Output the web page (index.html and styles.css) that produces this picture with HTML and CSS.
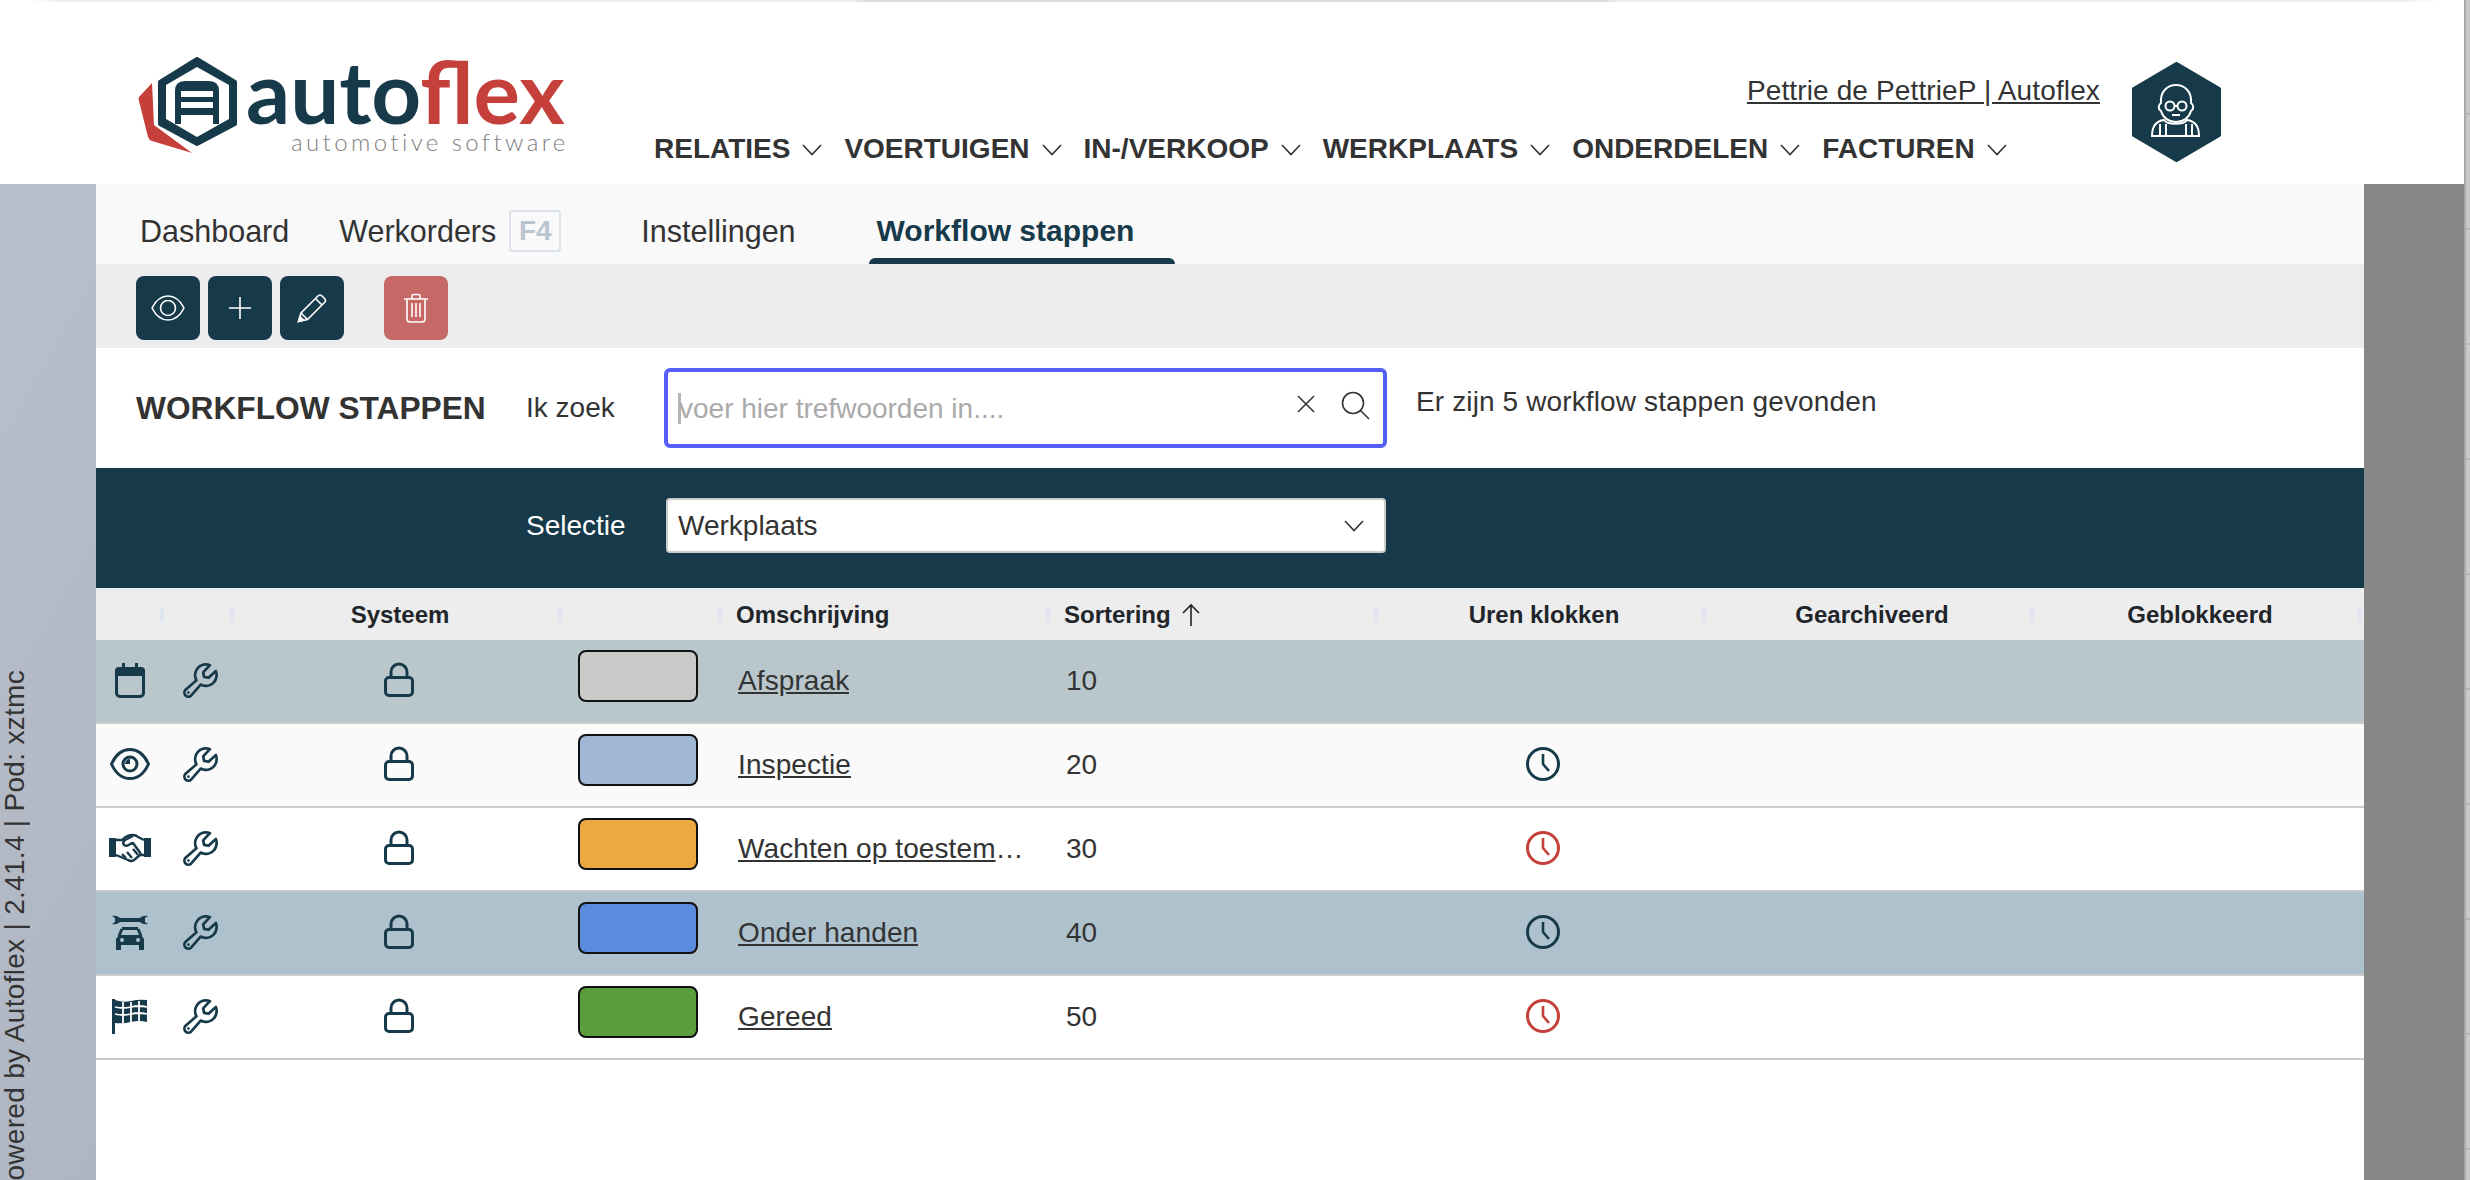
FILE: index.html
```html
<!DOCTYPE html>
<html lang="nl">

<head>
    <meta charset="UTF-8">
    <meta name="viewport" content="width=device-width, initial-scale=1.0">
    <title>Workflow stappen</title>
    <link rel="stylesheet" href="styles.css">
</head>

<body>
    <!-- icons used more than once -->
    <svg class="defs" width="0" height="0">
        <symbol id="i-chevron" viewBox="0 0 20 12">
            <path d="M1 1l9 9.500L19 1" fill="none" stroke="currentColor" stroke-width="1.600" />
        </symbol>
        <symbol id="i-wrench" viewBox="0 0 256 256">
            <path fill="currentColor" d="M226.76,69a8,8,0,0,0-12.84-2.88l-40.3,37.19-17.23-3.7-3.7-17.23,37.19-40.3A8,8,0,0,0,187,29.24,72,72,0,0,0,88,96,72.34,72.34,0,0,0,94,124.94L33.79,177c-.15.12-.29.26-.43.39a32,32,0,0,0,45.26,45.26c.13-.13.27-.28.39-.42L131.06,162A72,72,0,0,0,232,96,71.56,71.56,0,0,0,226.76,69ZM160,152a56.14,56.14,0,0,1-27.07-7,8,8,0,0,0-9.92,1.77L67.11,211.51a16,16,0,0,1-22.62-22.62L109.18,133a8,8,0,0,0,1.77-9.93,56,56,0,0,1,58.36-82.31l-31.2,33.81a8,8,0,0,0-1.94,7.1L141.83,108a8,8,0,0,0,6.14,6.14l26.35,5.66a8,8,0,0,0,7.1-1.94l33.81-31.2A56.06,56.06,0,0,1,160,152Z" />
            <circle cx="56" cy="200" r="8" fill="currentColor" />
        </symbol>
        <symbol id="i-lock" viewBox="0 0 32 36">
            <rect x="2.500" y="15.500" width="27" height="18" rx="3.500" fill="none" stroke="currentColor" stroke-width="3" />
            <path d="M8 15V10a8 8 0 0 1 16 0v5" fill="none" stroke="currentColor" stroke-width="3" />
        </symbol>
        <symbol id="i-clock" viewBox="0 0 36 36">
            <circle cx="18" cy="18" r="15.500" fill="none" stroke="currentColor" stroke-width="3" />
            <path d="M18 8v10l6 7" fill="none" stroke="currentColor" stroke-width="2.600" />
        </symbol>
    </svg>

    <div class="screen">
        <div class="window">
            <div class="hdr-line"></div>
            <header class="hdr">
                <a class="logo">
                    <svg class="logo-mark" width="100" height="96" viewBox="0 0 100 96">
                        <path d="M14 26L1 40q-1 2 0 4l9 36q1 3 4 4l40 12-38-28z" fill="#c5403a" />
                        <path d="M59 2l38 23v42L59 87 22 67V25z" fill="#173a4a" stroke="#173a4a" stroke-width="4" stroke-linejoin="round" />
                        <path d="M59 10l32 18v34L59 80 28 62V28z" fill="#fff" />
                        <path d="M37 34q0-10 10-10h24q10 0 10 10v33H37z" fill="#173a4a" />
                        <path d="M43 34h32v6H43zM43 45h32v6H43zM43 58h32v9H43z" fill="#fff" />
                    </svg>
                    <div class="logo-text">
                        <div class="logo-name">auto<span class="logo-red">flex</span></div>
                        <div class="logo-sub">automotive software</div>
                    </div>
                </a>
                <div class="hdr-main">
                    <div class="user"><a class="user-link">Pettrie de PettrieP | Autoflex</a></div>
                    <nav class="nav">
                        <a class="nav-item">RELATIES <svg class="chev"><use href="#i-chevron" /></svg></a>
                        <a class="nav-item">VOERTUIGEN <svg class="chev"><use href="#i-chevron" /></svg></a>
                        <a class="nav-item">IN-/VERKOOP <svg class="chev"><use href="#i-chevron" /></svg></a>
                        <a class="nav-item">WERKPLAATS <svg class="chev"><use href="#i-chevron" /></svg></a>
                        <a class="nav-item">ONDERDELEN <svg class="chev"><use href="#i-chevron" /></svg></a>
                        <a class="nav-item">FACTUREN <svg class="chev"><use href="#i-chevron" /></svg></a>
                    </nav>
                </div>
                <svg class="avatar" width="89" height="100" viewBox="0 0 89 100">
                    <path d="M44.500 2L87 27v46L44.500 98 2 73V27z" fill="#173a4a" stroke="#173a4a" stroke-width="4" stroke-linejoin="round" />
                    <g fill="none" stroke="#fff" stroke-width="2">
                        <path d="M29 41c-1-12 7-18 15-18s16 6 15 18c3 2 3 6 0 8-2 7-8 11-15 11s-13-4-15-11c-3-2-3-6 0-8z" />
                        <circle cx="38" cy="44" r="4.500" />
                        <circle cx="50" cy="44" r="4.500" />
                        <path d="M42 44h4M40 53h8" />
                        <path d="M32 58c-8 1-12 6-12 16h47c0-10-4-15-12-16-3 5-20 5-23 0zM28 62v12M34 62v12M54 62v12M60 62v12" />
                    </g>
                </svg>
            </header>

            <div class="body">
                <aside class="side">
                    <div class="powered">Powered by Autoflex | 2.41.4 | Pod: xztmc</div>
                </aside>

                <main class="content">
                    <div class="tabs">
                        <a class="tab tab-dash">Dashboard</a>
                        <a class="tab tab-orders">Werkorders <kbd class="key">F4</kbd></a>
                        <a class="tab tab-settings">Instellingen</a>
                        <a class="tab tab-active">Workflow stappen</a>
                    </div>

                    <div class="toolbar">
                        <button class="btn">
                            <svg width="34" height="26" viewBox="0 0 34 26" fill="none" stroke="#fff" stroke-width="1.600">
                                <path d="M1 13C5 5 11 1 17 1s12 4 16 12c-4 8-10 12-16 12S5 21 1 13z" />
                                <circle cx="17" cy="13" r="7.500" />
                            </svg>
                        </button>
                        <button class="btn">
                            <svg width="24" height="24" viewBox="0 0 24 24" fill="none" stroke="#fff" stroke-width="1.600">
                                <path d="M12 1v22M1 12h22" />
                            </svg>
                        </button>
                        <button class="btn">
                            <svg width="30" height="30" viewBox="0 0 30 30" fill="none" stroke="#fff" stroke-width="1.600">
                                <path d="M1.500 28.500L4 20 21 3q2-2 4 0l2.500 2.500q2 2 0 4L10.500 26.500z" />
                                <path d="M4 20l6.500 6.500M18.500 5.500l6.500 6.500" />
                                <path d="M1.500 28.500L3 23.500l3.500 3.500z" fill="#fff" />
                            </svg>
                        </button>
                        <button class="btn btn-del">
                            <svg width="26" height="30" viewBox="0 0 26 30" fill="none" stroke="#fff" stroke-width="1.600">
                                <path d="M1 6h24M9 6V3q0-1.500 1.500-1.500h5Q17 1.500 17 3v3" />
                                <path d="M4 6v20q0 3 3 3h12q3 0 3-3V6M9 10v14M13 10v14M17 10v14" />
                            </svg>
                        </button>
                    </div>

                    <div class="search-row">
                        <h1 class="title">WORKFLOW STAPPEN</h1>
                        <span class="label">Ik zoek</span>
                        <div class="search">
                            <span class="caret"></span>
                            <input class="search-input" type="text" placeholder="voer hier trefwoorden in....">
                            <svg class="search-x" width="20" height="18" viewBox="0 0 20 18" fill="none" stroke="#333" stroke-width="1.600">
                                <path d="M2 1l16 16M18 1L2 17" />
                            </svg>
                            <svg class="search-glass" width="29" height="29" viewBox="0 0 29 29" fill="none" stroke="#333" stroke-width="1.600">
                                <circle cx="12" cy="12" r="10.500" />
                                <path d="M19.500 19.500L28 28" />
                            </svg>
                        </div>
                        <span class="found">Er zijn 5 workflow stappen gevonden</span>
                    </div>

                    <div class="filter">
                        <span class="filter-label">Selectie</span>
                        <div class="select">
                            <span>Werkplaats</span>
                            <svg class="select-chev"><use href="#i-chevron" /></svg>
                        </div>
                    </div>

                    <div class="grid-row head">
                        <div class="hc"></div>
                        <div class="hc"></div>
                        <div class="hc hc-mid">Systeem</div>
                        <div class="hc"></div>
                        <div class="hc hc-left">Omschrijving</div>
                        <div class="hc hc-left">Sortering
                            <svg class="sort" width="20" height="24" viewBox="0 0 20 24" fill="none" stroke="#212529" stroke-width="1.600">
                                <path d="M10 23V2M2 10l8-8 8 8" />
                            </svg>
                        </div>
                        <div class="hc hc-mid">Uren klokken</div>
                        <div class="hc hc-mid">Gearchiveerd</div>
                        <div class="hc hc-mid">Geblokkeerd</div>
                    </div>

                    <div class="grid-row row row-afspraak">
                        <div class="c c-icon">
                            <svg class="ico" width="32" height="35" viewBox="0 0 32 35">
                                <path d="M8 0h3v6H8zM21 0h3v6h-3z" fill="currentColor" />
                                <path d="M5 4h22q4 0 4 4v5H1V8q0-4 4-4z" fill="currentColor" />
                                <rect x="2.500" y="5.500" width="27" height="28" rx="3.500" fill="none" stroke="currentColor" stroke-width="3" />
                            </svg>
                        </div>
                        <div class="c c-tool"><svg class="ico" width="43" height="43"><use href="#i-wrench" /></svg></div>
                        <div class="c c-mid"><svg class="ico" width="32" height="36"><use href="#i-lock" /></svg></div>
                        <div class="c c-swatch"><span class="swatch sw-grey"></span></div>
                        <div class="c c-name"><a class="name">Afspraak</a></div>
                        <div class="c c-num">10</div>
                        <div class="c c-mid"></div>
                        <div class="c"></div>
                        <div class="c"></div>
                    </div>

                    <div class="grid-row row row-inspectie">
                        <div class="c c-icon">
                            <svg class="ico" width="40" height="32" viewBox="0 0 40 32">
                                <path d="M1.500 16C6 6 13 1.500 20 1.500S34 6 38.500 16C34 26 27 30.500 20 30.500S6 26 1.500 16z" fill="none" stroke="currentColor" stroke-width="3" />
                                <circle cx="20" cy="16" r="7" fill="none" stroke="currentColor" stroke-width="3" />
                                <path d="M20 11a5 5 0 0 0-5 5h5z" fill="currentColor" />
                            </svg>
                        </div>
                        <div class="c c-tool"><svg class="ico" width="43" height="43"><use href="#i-wrench" /></svg></div>
                        <div class="c c-mid"><svg class="ico" width="32" height="36"><use href="#i-lock" /></svg></div>
                        <div class="c c-swatch"><span class="swatch sw-blue"></span></div>
                        <div class="c c-name"><a class="name">Inspectie</a></div>
                        <div class="c c-num">20</div>
                        <div class="c c-mid"><svg class="ico" width="36" height="36"><use href="#i-clock" /></svg></div>
                        <div class="c"></div>
                        <div class="c"></div>
                    </div>

                    <div class="grid-row row">
                        <div class="c c-icon">
                            <svg class="ico" width="42" height="30" viewBox="0 0 42 30">
                                <path d="M0 5h7v19H0zM35 5h7v19h-7z" fill="currentColor" />
                                <g fill="none" stroke="currentColor" stroke-width="2.400" stroke-linejoin="round">
                                    <path d="M7 7h6q5-5 11-5 3 0 5 2l6 3" />
                                    <path d="M35 22h-4l-6 5q-3 2-6 0L7 22" />
                                    <path d="M24 3l-8 4q-3 2-1 5 3 2 6-1l3-1 8 11" />
                                    <path d="M13 21l4 4M18 19l5 6M24 16l5 6" />
                                </g>
                            </svg>
                        </div>
                        <div class="c c-tool"><svg class="ico" width="43" height="43"><use href="#i-wrench" /></svg></div>
                        <div class="c c-mid"><svg class="ico" width="32" height="36"><use href="#i-lock" /></svg></div>
                        <div class="c c-swatch"><span class="swatch sw-orange"></span></div>
                        <div class="c c-name"><a class="name">Wachten op toestemming</a></div>
                        <div class="c c-num">30</div>
                        <div class="c c-mid"><svg class="ico ico-red" width="36" height="36"><use href="#i-clock" /></svg></div>
                        <div class="c"></div>
                        <div class="c"></div>
                    </div>

                    <div class="grid-row row row-handen">
                        <div class="c c-icon">
                            <svg class="ico" width="36" height="35" viewBox="0 0 36 35">
                                <path d="M0 1c4-1 7 1 8 2h20c1-1 4-3 8-2l-3 2v4l3 2c-4 1-7-1-8-2H8c-1 1-4 3-8 2l3-2V3z" fill="currentColor" />
                                <path d="M10 14L7 21M26 14l3 7M10 13.500h16" fill="none" stroke="currentColor" stroke-width="3" />
                                <path d="M7 20h22l3 4v6H4v-6z" fill="currentColor" />
                                <path d="M4 29h5v6H4zM27 29h5v6h-5z" fill="currentColor" />
                                <circle cx="10" cy="25" r="2" fill="#aec2ce" />
                                <circle cx="26" cy="25" r="2" fill="#aec2ce" />
                            </svg>
                        </div>
                        <div class="c c-tool"><svg class="ico" width="43" height="43"><use href="#i-wrench" /></svg></div>
                        <div class="c c-mid"><svg class="ico" width="32" height="36"><use href="#i-lock" /></svg></div>
                        <div class="c c-swatch"><span class="swatch sw-mid"></span></div>
                        <div class="c c-name"><a class="name">Onder handen</a></div>
                        <div class="c c-num">40</div>
                        <div class="c c-mid"><svg class="ico" width="36" height="36"><use href="#i-clock" /></svg></div>
                        <div class="c"></div>
                        <div class="c"></div>
                    </div>

                    <div class="grid-row row">
                        <div class="c c-icon">
                            <svg class="ico" width="36" height="35" viewBox="0 0 36 35">
                                <path d="M1.500 0v35" stroke="currentColor" stroke-width="3" />
                                <path d="M3 1q8 3 16 1t16-1v22q-8-2-16 0t-16 1z" fill="currentColor" />
                                <path d="M11 3v21M19 3v20M27 2v20M3 8q8 2 16 0t16 0M3 15q8 2 16 0t16 0" fill="none" stroke="#fff" stroke-width="1.800" />
                            </svg>
                        </div>
                        <div class="c c-tool"><svg class="ico" width="43" height="43"><use href="#i-wrench" /></svg></div>
                        <div class="c c-mid"><svg class="ico" width="32" height="36"><use href="#i-lock" /></svg></div>
                        <div class="c c-swatch"><span class="swatch sw-green"></span></div>
                        <div class="c c-name"><a class="name">Gereed</a></div>
                        <div class="c c-num">50</div>
                        <div class="c c-mid"><svg class="ico ico-red" width="36" height="36"><use href="#i-clock" /></svg></div>
                        <div class="c"></div>
                        <div class="c"></div>
                    </div>
                </main>

                <div class="shade"></div>
            </div>
        </div>
        <div class="edge"></div>
    </div>
</body>

</html>
```

FILE: styles.css
```css
* {
    box-sizing: border-box;
}

html,
body {
    margin: 0;
    height: 1180px;
    overflow: hidden;
    background: #fff;
}

body {
    font-family: "Liberation Sans", Arial, sans-serif;
    font-size: 28px;
    color: #333;
}

.defs {
    display: block;
    height: 0;
}

.screen {
    display: flex;
    width: 2470px;
    height: 1180px;
}

.window {
    width: 2464px;
    display: flex;
    flex-direction: column;
}

.edge {
    width: 6px;
    border-left: 2px solid #a9a9ab;
    background:
        linear-gradient(#c9c9c5 0 75px, transparent 75px),
        repeating-linear-gradient(#c9c9cc 0 113px, #b5b5b8 113px 115px);
}

/* header */
.hdr-line {
    height: 2px;
    background: linear-gradient(to right, #fff 30px, #eee 60px, #eee 850px, #d9d9d9 870px, #d9d9d9 1600px, #eee 1620px, #eee 2400px, #fff 2440px);
}

.hdr {
    height: 182px;
    display: flex;
    align-items: flex-start;
    background: #fff;
    padding-left: 138px;
}

.logo {
    width: 516px;
    flex: none;
    display: flex;
    padding-top: 55px;
}

.logo-mark {
    flex: none;
}

.logo-text {
    margin-left: 8px;
    margin-top: -5px;
}

.logo-name {
    font-family: Lato, sans-serif;
    font-weight: 700;
    font-size: 87px;
    line-height: 78px;
    color: #173a4a;
}

.logo-red {
    color: #c5403a;
}

.logo-sub {
    font-family: Lato, sans-serif;
    font-weight: 300;
    font-size: 24px;
    line-height: 24px;
    letter-spacing: 3.400px;
    color: #808080;
    margin-left: 45px;
    white-space: nowrap;
}

.hdr-main {
    width: 1478px;
    flex: none;
}

.user {
    text-align: right;
    padding: 72px 32px 0 0;
    line-height: 34px;
}

.user-link {
    text-decoration: underline;
    letter-spacing: .13px;
}

.nav {
    display: flex;
    gap: 22px;
    margin-top: 24px;
}

.nav-item {
    display: flex;
    align-items: center;
    gap: 12px;
    font-size: 28px;
    font-weight: bold;
    line-height: 34px;
    white-space: nowrap;
}

.chev {
    width: 20px;
    height: 12px;
    margin-top: 2px;
}

.avatar {
    margin-top: 60px;
    flex: none;
}

/* body */
.body {
    flex: 1;
    display: flex;
    min-height: 0;
}

.side {
    width: 96px;
    flex: none;
    overflow: hidden;
    padding-top: 486px;
    background: linear-gradient(120deg, #b9bfca, #aeb6c3);
}

.powered {
    writing-mode: vertical-rl;
    transform: rotate(180deg);
    font-size: 28px;
    line-height: 30px;
    letter-spacing: .3px;
    white-space: nowrap;
    color: #333;
}

.shade {
    width: 100px;
    flex: none;
    background: #878787;
}

.content {
    width: 2268px;
    flex: none;
    background: #fff;
}

/* tabs */
.tabs {
    height: 80px;
    display: flex;
    align-items: flex-start;
    background: #f9f9f9;
    font-size: 30.500px;
    color: #333;
}

.tab {
    padding-top: 30px;
    line-height: 34px;
    white-space: nowrap;
}

.tab-dash {
    margin-left: 44px;
}

.tab-orders {
    margin-left: 50px;
    display: flex;
    align-items: center;
    gap: 13px;
}

.key {
    width: 52px;
    height: 42px;
    margin: -4px 0;
    border: 2px solid #dbe4ec;
    border-radius: 3px;
    font-family: "Liberation Sans", Arial, sans-serif;
    font-weight: bold;
    font-size: 28px;
    line-height: 38px;
    text-align: center;
    color: #b9c5cf;
}

.tab-settings {
    margin-left: 80px;
}

.tab-active {
    position: relative;
    margin-left: 73px;
    padding: 30px 41px 0 8px;
    height: 80px;
    font-size: 30px;
    font-weight: bold;
    color: #173a4a;
}

.tab-active::after {
    content: "";
    position: absolute;
    left: 0;
    right: 0;
    bottom: 0;
    height: 6px;
    border-radius: 6px 6px 0 0;
    background: #173a4a;
}

/* toolbar */
.toolbar {
    height: 84px;
    display: flex;
    gap: 8px;
    padding: 12px 40px;
    background: #ededed;
}

.btn {
    width: 64px;
    height: 64px;
    padding: 0;
    border: 0;
    border-radius: 8px;
    display: flex;
    align-items: center;
    justify-content: center;
    background: #173a4a;
}

.btn-del {
    margin-left: 32px;
    background: #c66866;
}

/* search */
.search-row {
    height: 120px;
    display: flex;
    align-items: center;
    padding-left: 40px;
    background: #fff;
}

.title {
    width: 390px;
    margin: 1px 0 0;
    font-size: 31.700px;
    white-space: nowrap;
}

.label {
    width: 138px;
}

.search {
    width: 723px;
    height: 80px;
    display: flex;
    align-items: center;
    padding: 0 13px 0 10px;
    border: 4px solid #5460f5;
    border-radius: 6px;
}

.caret {
    flex: none;
    width: 3px;
    height: 31px;
    background: #b5b5b5;
    margin-right: -3px;
}

.search-input {
    flex: 1;
    min-width: 0;
    border: 0;
    outline: 0;
    padding: 2px 0 0;
    margin-left: 1px;
    background: none;
    font: inherit;
}

.search-input::placeholder {
    color: #aaa;
    opacity: 1;
}

.search-x {
    margin: 0 25px 8px 0;
}

.search-glass {
    margin-bottom: 6px;
}

.found {
    margin-left: 29px;
    padding-bottom: 12px;
    letter-spacing: .13px;
    white-space: nowrap;
}

/* filter */
.filter {
    height: 120px;
    display: flex;
    align-items: flex-start;
    padding: 30px 0 0 430px;
    background: #173a4a;
    color: #fff;
}

.filter-label {
    width: 140px;
    line-height: 55px;
}

.select {
    width: 720px;
    height: 55px;
    display: flex;
    align-items: center;
    justify-content: space-between;
    padding: 0 20px 0 10px;
    background: #fff;
    border: 2px solid #ccc;
    border-radius: 4px;
    color: #333;
}

.select-chev {
    width: 20px;
    height: 12px;
}

/* table */
.grid-row {
    display: grid;
    grid-template-columns: 66px 70px 328px 160px 328px 328px 328px 328px 328px 4px;
}

.head {
    height: 52px;
    padding-top: 1px;
    background: #ededed;
    font-size: 24px;
    font-weight: bold;
    color: #212529;
}

.hc {
    position: relative;
    display: flex;
    align-items: center;
    white-space: nowrap;
}

.hc::after {
    content: "";
    position: absolute;
    right: -2px;
    top: 18px;
    width: 4px;
    height: 15px;
    background: #e0e6ef;
}

.hc-mid {
    justify-content: center;
    padding-left: 8px;
}

.hc-left {
    padding-left: 16px;
}

.sort {
    margin-left: 10px;
}

.row {
    height: 84px;
    background: #fff;
    border-bottom: 2px solid #ccc;
}

.row-afspraak {
    background: #b9c7cc;
}

.row-inspectie {
    background: #fafafa;
}

.row-handen {
    background: #aec2ce;
}

.c {
    display: flex;
    align-items: center;
    min-width: 0;
}

.c-icon {
    justify-content: center;
    padding-left: 2px;
}

.c-tool {
    justify-content: center;
    padding-left: 6px;
}

.c-mid {
    justify-content: center;
    padding-left: 6px;
}

.ico {
    margin-bottom: 2px;
    color: #173a4a;
}

.ico-red {
    color: #c5403a;
}

.c-swatch {
    padding-left: 18px;
}

.swatch {
    width: 120px;
    height: 52px;
    margin-bottom: 11px;
    border: 2px solid #111;
    border-radius: 8px;
}

.sw-grey {
    background: #c9c9c9;
}

.sw-blue {
    background: #a0b7d6;
}

.sw-orange {
    background: #eba940;
}

.sw-mid {
    background: #5b8bdc;
}

.sw-green {
    background: #5a9e3c;
}

.c-name {
    padding: 0 20px 0 18px;
}

.name {
    display: block;
    overflow: hidden;
    white-space: nowrap;
    text-overflow: ellipsis;
    text-decoration: underline;
    letter-spacing: .1px;
}

.c-num {
    padding-left: 18px;
}
```
